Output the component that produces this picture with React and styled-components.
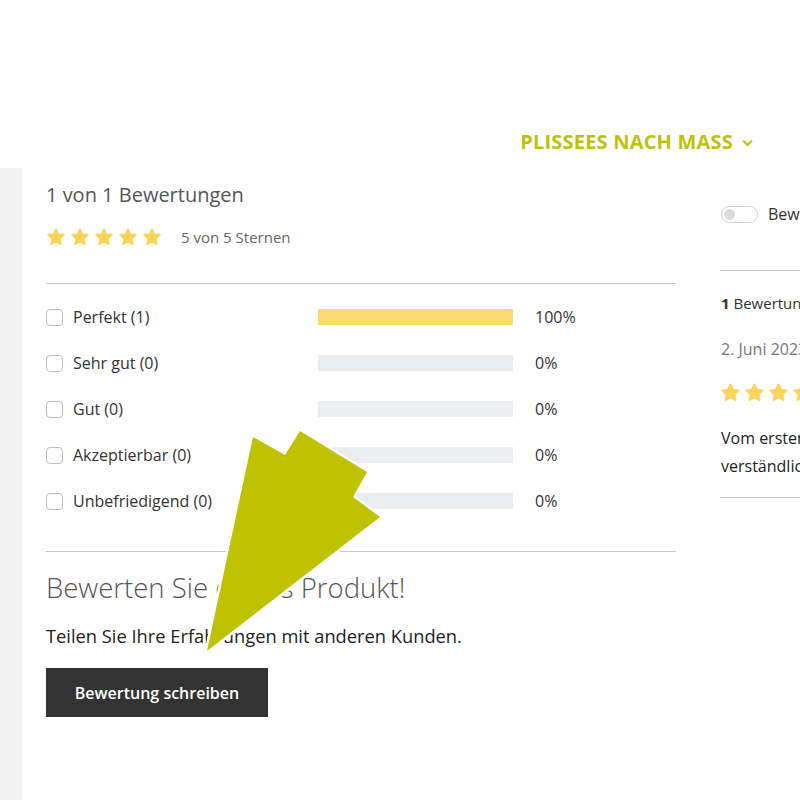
import React from "react";
import styled, { createGlobalStyle } from "styled-components";

const Global = createGlobalStyle`
  html, body { margin: 0; padding: 0; background: #fff; }
  body { font-family: "Open Sans", "Liberation Sans", sans-serif; overflow: hidden; }
  * { box-sizing: border-box; }
`;

const Page = styled.div`
  position: relative;
  width: 800px;
  height: 800px;
  overflow: hidden;
  background: #fff;
`;

const TopBar = styled.header`
  height: 168px;
  display: flex;
  justify-content: flex-end;
  align-items: flex-end;
  padding: 0 46px 12px 0;
`;

const NavLink = styled.a`
  display: flex;
  align-items: center;
  gap: 8px;
  color: #bcc10c;
  font-weight: 700;
  font-size: 20px;
  line-height: 28px;
  letter-spacing: 0.2px;
  text-decoration: none;
`;

const Body = styled.div`
  display: flex;
  height: 632px;
`;

const Sidebar = styled.aside`
  flex: 0 0 22px;
  background: #f2f2f2;
`;

const Content = styled.main`
  display: flex;
  gap: 44px;
  padding: 14px 0 0 24px;
  flex: 1;
  min-width: 0;
`;

const LeftCol = styled.section`
  flex: 0 0 630px;
`;

const RightCol = styled.section`
  flex: 0 0 300px;
  white-space: nowrap;
`;

const Title = styled.h2`
  margin: 0;
  font-weight: 400;
  font-size: 20px;
  line-height: 26px;
  color: #555;
`;

const StarsRow = styled.div`
  display: flex;
  align-items: center;
  margin-top: ${(p) => p.$mt || 0}px;
  height: 20px;
`;

const Stars = styled.div`
  display: flex;
  gap: ${(p) => p.$gap}px;
`;

const StarsText = styled.span`
  margin-left: 19px;
  font-size: 15px;
  color: #666;
`;

const Divider = styled.hr`
  border: 0;
  border-top: 1px solid #c8c8c8;
  margin: ${(p) => p.$m || "0"};
`;

const Rows = styled.div`
  padding-top: 10px;
`;

const Row = styled.label`
  display: flex;
  align-items: center;
  height: 46px;
`;

const Check = styled.span`
  width: 17px;
  height: 17px;
  border: 1px solid #bdbdbd;
  border-radius: 4px;
  flex: 0 0 auto;
`;

const RowLabel = styled.span`
  margin-left: 10px;
  width: 245px;
  font-size: 16px;
  color: #333;
`;

const Bar = styled.div`
  width: 195px;
  height: 16px;
  background: #ebecee;
`;

const BarFill = styled.div`
  height: 100%;
  background: #fdd972;
`;

const Percent = styled.span`
  margin-left: 22px;
  font-size: 16px;
  color: #333;
`;

const Heading = styled.h3`
  margin: 19px 0 0;
  font-weight: 300;
  font-size: 27.5px;
  line-height: 34px;
  color: #555;
`;

const Para = styled.p`
  margin: 19px 0 0;
  font-size: 18.3px;
  line-height: 24px;
  color: #222;
`;

const Button = styled.button`
  margin-top: 20px;
  width: 222px;
  height: 49px;
  border: 0;
  background: #333;
  color: #fff;
  font-family: inherit;
  font-weight: 600;
  font-size: 16px;
  cursor: pointer;
`;

const ToggleRow = styled.div`
  display: flex;
  align-items: center;
  gap: 10px;
  height: 24px;
  margin-top: 20px;
  font-size: 16px;
  color: #333;
`;

const Toggle = styled.span`
  position: relative;
  width: 37px;
  height: 17px;
  margin-left: 1px;
  border: 1px solid #cfcfcf;
  border-radius: 9px;
  background: #fff;
  &::after {
    content: "";
    position: absolute;
    left: 2px;
    top: 2px;
    width: 11px;
    height: 11px;
    border-radius: 50%;
    background: #dcdcdc;
  }
`;

const Count = styled.div`
  margin-top: 22px;
  font-size: 15px;
  line-height: 20px;
  color: #333;
  padding-left: 1px;
  b { font-weight: 700; }
`;

const DateText = styled.div`
  margin-top: 26px;
  font-size: 16px;
  line-height: 20px;
  color: #777;
  padding-left: 1px;
`;

const ReviewText = styled.p`
  margin: 22px 0 0;
  padding-left: 1px;
  font-size: 16px;
  line-height: 28px;
  color: #222;
`;

const ArrowLayer = styled.svg`
  position: absolute;
  left: 0;
  top: 0;
  pointer-events: none;
`;

const Star = ({ size }) => (
  <svg width={size} height={size} viewBox="0 0 24 24">
    <path
      d="M12 2.6l2.9 6.1 6.6.8-4.9 4.6 1.3 6.6L12 17.4l-5.9 3.3 1.3-6.6-4.9-4.6 6.6-.8z"
      fill="#fcd45c"
      stroke="#fcd45c"
      strokeWidth="2"
      strokeLinejoin="round"
    />
  </svg>
);

const StarGroup = ({ size, gap }) => (
  <Stars $gap={gap}>
    {[0, 1, 2, 3, 4].map((i) => (
      <Star key={i} size={size} />
    ))}
  </Stars>
);

const rows = [
  { label: "Perfekt (1)", pct: 100 },
  { label: "Sehr gut (0)", pct: 0 },
  { label: "Gut (0)", pct: 0 },
  { label: "Akzeptierbar (0)", pct: 0 },
  { label: "Unbefriedigend (0)", pct: 0 },
];

export default function App() {
  return (
    <Page>
      <Global />
      <TopBar>
        <NavLink href="#">
          PLISSEES NACH MASS
          <svg width="13" height="9" viewBox="0 0 13 9">
            <path d="M2 2.5l4.5 4.5L11 2.5" fill="none" stroke="#bcc10c" strokeWidth="2" />
          </svg>
        </NavLink>
      </TopBar>
      <Body>
        <Sidebar />
        <Content>
          <LeftCol>
            <Title>1 von 1 Bewertungen</Title>
            <StarsRow $mt={19}>
              <StarGroup size={20} gap={4} />
              <StarsText>5 von 5 Sternen</StarsText>
            </StarsRow>
            <Divider $m="36px 0 0" />
            <Rows>
              {rows.map((r) => (
                <Row key={r.label}>
                  <Check />
                  <RowLabel>{r.label}</RowLabel>
                  <Bar>
                    <BarFill style={{ width: `${r.pct}%` }} />
                  </Bar>
                  <Percent>{r.pct}%</Percent>
                </Row>
              ))}
            </Rows>
            <Divider $m="27px 0 0" />
            <Heading>Bewerten Sie dieses Produkt!</Heading>
            <Para>Teilen Sie Ihre Erfahrungen mit anderen Kunden.</Para>
            <Button>Bewertung schreiben</Button>
          </LeftCol>
          <RightCol>
            <ToggleRow>
              <Toggle />
              Bewertungen mit Bildern
            </ToggleRow>
            <Divider $m="44px 0 0" />
            <Count>
              <b>1</b> Bewertung für dieses Produkt
            </Count>
            <DateText>2. Juni 2023</DateText>
            <StarsRow $mt={23}>
              <StarGroup size={21} gap={3} />
            </StarsRow>
            <ReviewText>
              Vom ersten Kontakt bis zur Lieferung
              <br />
              verständlich und freundlich.
            </ReviewText>
            <Divider $m="17px 0 0" />
          </RightCol>
        </Content>
      </Body>
      <ArrowLayer width="800" height="800" viewBox="0 0 800 800">
        <polygon
          points="253,437 285,455 300,431 367,472 353,497 380,517 207,651"
          fill="#bec200"
          stroke="#fff"
          strokeWidth="5"
          strokeLinejoin="miter"
          paintOrder="stroke"
        />
      </ArrowLayer>
    </Page>
  );
}
